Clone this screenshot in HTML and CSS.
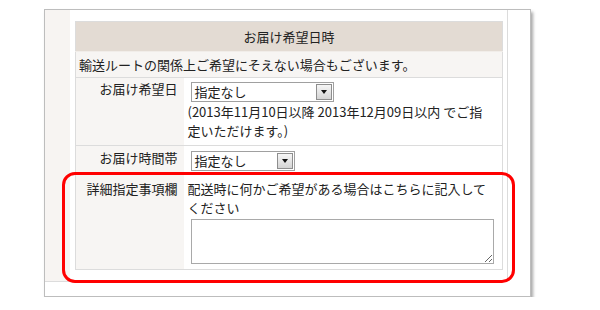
FILE: index.html
```html
<!DOCTYPE html>
<html lang="ja">
<head>
<meta charset="utf-8">
<title>お届け希望日時</title>
<link rel="stylesheet" href="styles.css">
</head>
<body>
<div class="frame">
  <div class="inner">
    <div class="strip"></div>
    <div class="content">
      <table class="form">
        <colgroup>
          <col class="col-label">
          <col class="col-value">
        </colgroup>
        <tr>
          <th class="head" colspan="2">お届け希望日時</th>
        </tr>
        <tr>
          <td class="note" colspan="2">輸送ルートの関係上ご希望にそえない場合もございます。</td>
        </tr>
        <tr class="row-date">
          <th class="label">お届け希望日</th>
          <td class="value">
            <div class="select wide"><span class="sel-text">指定なし</span><span class="sel-btn"><span class="tri"></span></span></div>
            <div class="text">(2013年11月10日以降 2013年12月09日以内 でご指定いただけます。)</div>
          </td>
        </tr>
        <tr class="row-time">
          <th class="label">お届け時間帯</th>
          <td class="value">
            <div class="select narrow"><span class="sel-text">指定なし</span><span class="sel-btn"><span class="tri"></span></span></div>
          </td>
        </tr>
        <tr class="row-memo">
          <th class="label">詳細指定事項欄</th>
          <td class="value">
            <div class="text">配送時に何かご希望がある場合はこちらに記入してください</div>
            <textarea class="memo"></textarea>
          </td>
        </tr>
      </table>
    </div>
  </div>
  <div class="foot"></div>
  <div class="highlight"></div>
</div>
</body>
</html>
```

FILE: styles.css
```css
html, body {
  margin: 0;
  padding: 0;
  background: #ffffff;
}

body {
  font-family: "Noto Sans CJK JP", "Noto Sans", sans-serif;
  font-size: 13px;
  color: #222222;
}

.frame {
  position: relative;
  box-sizing: border-box;
  width: 487px;
  height: 288px;
  margin: 9px 0 0 44px;
  border: 1px solid #bdbdbd;
  box-shadow: 2px 3px 3px rgba(0, 0, 0, 0.35);
  background: #ffffff;
}

.inner {
  display: flex;
  width: 462px;
  border-bottom: 1px solid #dcdcdc;
}

.strip {
  width: 25px;
  flex: none;
  background: #f7f4f2;
}

.content {
  flex: 1;
  padding: 11px 4px 11px 5px;
  border-right: 1px solid #dcdcdc;
}

.foot {
  height: 12px;
}

.form {
  width: 427px;
  border-collapse: collapse;
  border: 1px solid #dcdcdc;
  table-layout: fixed;
}

.col-label { width: 108px; }
.col-value { width: 319px; }

.form th,
.form td {
  padding: 0;
  font-weight: normal;
  vertical-align: top;
  text-align: left;
}

.form .head {
  height: 29px;
  line-height: 29px;
  text-align: center;
  background: #e3dbd3;
  border-bottom: 1px solid #f1ede9;
}

.form .note {
  height: 25px;
  line-height: 25px;
  padding-left: 3px;
  background: #f7f5f3;
  border-bottom: 1px solid #dcdcdc;
}

.form .label {
  padding-right: 6px;
  text-align: right;
  background: #f7f5f3;
  line-height: 19px;
  border-bottom: 1px solid #dcdcdc;
}

.form .value {
  padding-left: 4px;
  padding-right: 12px;
  line-height: 19px;
  background: #ffffff;
  border-bottom: 1px solid #dcdcdc;
}

.row-date .label { padding-top: 1px; height: 66px; }
.row-date .value { padding-top: 4px; padding-bottom: 4px; }
.row-date .text { line-height: 18.5px; margin-top: 1px; }

.row-time .label { padding-top: 2px; height: 24px; }
.row-time .value { padding-top: 5px; padding-bottom: 1px; }

.row-memo .label { padding-top: 6px; }
.row-memo .value { padding-top: 6px; padding-bottom: 5px; }

.select {
  display: flex;
  box-sizing: border-box;
  height: 20px;
  margin-left: 3px;
  border: 1px solid #a0a0a0;
  background: #ffffff;
  align-items: center;
}

.select.wide { width: 143px; }
.select.narrow { width: 104px; }

.sel-text {
  flex: 1;
  padding-left: 3px;
  line-height: 18px;
}

.sel-btn {
  box-sizing: border-box;
  width: 16px;
  height: 16px;
  margin-right: 1px;
  border: 1px solid #8e8e8e;
  background: linear-gradient(#f6f6f6, #d4d4d4);
  display: flex;
  align-items: center;
  justify-content: center;
}

.tri {
  width: 0;
  height: 0;
  border-left: 3.5px solid transparent;
  border-right: 3.5px solid transparent;
  border-top: 4px solid #111111;
}

.memo {
  display: block;
  box-sizing: border-box;
  width: 303px;
  height: 45px;
  margin: 2px 0 0 3px;
  border: 1px solid #a9a9a9;
  padding: 2px;
  font: inherit;
  resize: both;
}

.highlight {
  position: absolute;
  left: 17px;
  top: 162px;
  box-sizing: border-box;
  width: 453px;
  height: 111px;
  border: 3px solid #ff0000;
  border-radius: 13px;
  pointer-events: none;
}
```
